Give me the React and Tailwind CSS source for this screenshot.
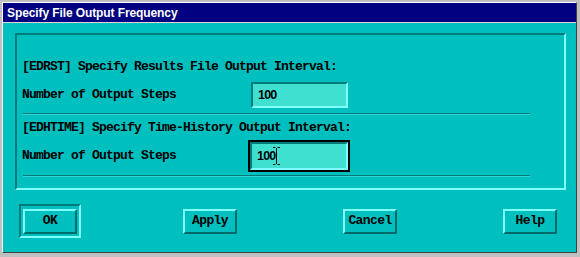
import React from 'react';

const mono = { fontFamily: '"Liberation Mono", "DejaVu Sans Mono", monospace' };

const Field = ({ value, focused }) => (
    <div className={focused ? 'border-2 border-black' : ''}>
        <div className={`${focused ? 'w-[98px] h-[28px]' : 'w-[97px] h-[26px]'} bg-[#40e0d0] border-2 border-t-[#007b7b] border-l-[#007b7b] border-b-[#80ffff] border-r-[#80ffff] flex items-center pl-[5px]`}>
            <span className="relative font-['Liberation_Sans',Arial,sans-serif] font-bold text-[12.5px] text-black leading-none">
                {value}
                {focused && (
                    <svg className="absolute left-[16px] -top-[3px]" width="7" height="18" viewBox="0 0 7 18">
                        <path d="M0 0.5H2.5M4.5 0.5H7M3.5 1V17M0 17.5H2.5M4.5 17.5H7" stroke="black" strokeWidth="1" fill="none" />
                    </svg>
                )}
            </span>
        </div>
    </div>
);

const Separator = () => (
    <div className="ml-[1px] w-[507px] border-t border-[#007b7b] border-b border-b-[#33d6d6]" />
);

const Button = ({ label, isDefault }) => (
    <div className={`w-[62px] h-[34px] flex items-center justify-center ${isDefault ? 'border-2 border-t-[#007b7b] border-l-[#007b7b] border-b-[#80ffff] border-r-[#80ffff]' : ''}`}>
        <button
            style={mono}
            className="w-[54px] h-[25px] bg-[#00bfbf] border-2 border-t-[#80ffff] border-l-[#80ffff] border-b-[#006b6b] border-r-[#006b6b] text-[13px] tracking-[-0.6px] font-bold text-black flex items-center justify-center"
        >
            {label}
        </button>
    </div>
);

export default function App() {
    return (
        <div className="w-[580px] h-[257px] bg-[#c0c0c0] pt-[2px] pl-[2px] pr-[3px] pb-[4px]">
            <div className="w-full h-full flex flex-col border-l border-t border-white border-r border-b border-r-[#404040] border-b-[#404040]">
                {/* title bar */}
                <div className="h-[19px] bg-[#000080] flex items-center pl-[4px]">
                    <span className="font-['Liberation_Sans',Arial,sans-serif] font-bold text-[12px] text-white tracking-[-0.1px]">
                        Specify File Output Frequency
                    </span>
                </div>
                <div className="h-[1px] bg-[#d8d8d8]" />

                <div className="flex-1 bg-[#00bfbf] pl-[12px] pt-[10px]">
                    {/* etched frame */}
                    <div
                        style={mono}
                        className="w-[551px] h-[157px] border-2 border-t-[#007b7b] border-l-[#007b7b] border-b-[#80ffff] border-r-[#80ffff] pl-[5px] pt-[23px] text-black font-bold text-[13px] tracking-[-0.8px]"
                    >
                        <div className="h-[18px] flex items-center">[EDRST] Specify Results File Output Interval:</div>
                        <div className="mt-[6px] flex items-center">
                            <span className="w-[229px]">Number of Output Steps</span>
                            <Field value="100" />
                        </div>
                        <div className="mt-[5px]"><Separator /></div>

                        <div className="mt-[4px] h-[18px] flex items-center">[EDHTIME] Specify Time-History Output Interval:</div>
                        <div className="mt-[3px] flex items-center">
                            <span className="w-[226px]">Number of Output Steps</span>
                            <Field value="100" focused />
                        </div>
                        <div className="mt-[3px]"><Separator /></div>
                    </div>

                    {/* buttons */}
                    <div className="mt-[14px] ml-[4px] w-[542px] flex items-center justify-between">
                        <Button label="OK" isDefault />
                        <Button label="Apply" />
                        <Button label="Cancel" />
                        <Button label="Help" />
                    </div>
                </div>
            </div>
        </div>
    );
}
